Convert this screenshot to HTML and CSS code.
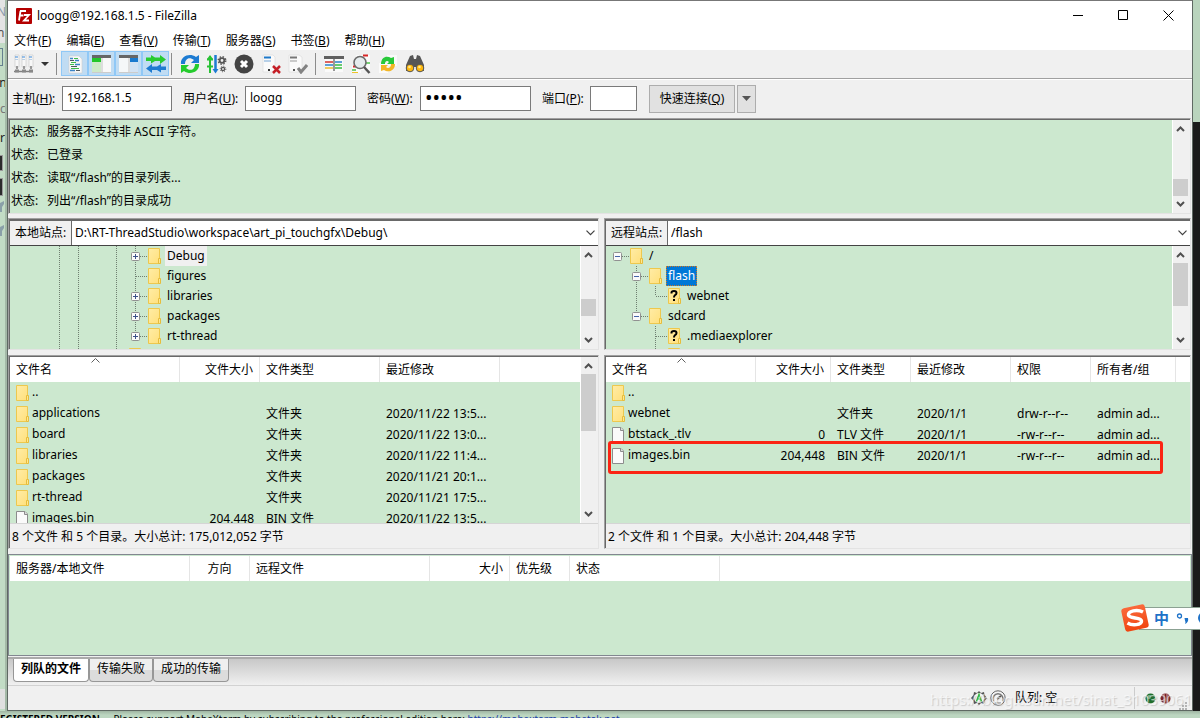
FILE: index.html
```html
<!DOCTYPE html>
<html lang="zh-CN">
<head>
<meta charset="utf-8">
<title>loogg@192.168.1.5 - FileZilla</title>
<link rel="stylesheet" href="styles.css">
</head>
<body>
<svg class="defs" aria-hidden="true">
  <defs>
    <linearGradient id="gf" x1="0" y1="0" x2="1" y2="1"><stop offset="0" stop-color="#ffeca6"/><stop offset="1" stop-color="#ffe07c"/></linearGradient>
    <linearGradient id="gs" x1="0" y1="0" x2="0" y2="1"><stop offset="0" stop-color="#fa6a3c"/><stop offset="1" stop-color="#f04410"/></linearGradient>
  </defs>
  <symbol id="folder" viewBox="0 0 13 16"><path d="M.5.5h11v15H.5z" fill="url(#gf)" stroke="#edc84e"/><path d="M10.5 10.5h2v5h-2z" fill="#ffe791" stroke="#e6bd3c"/></symbol>
  <symbol id="unknown" viewBox="0 0 13 16"><path d="M.5.5h11v15H.5z" fill="url(#gf)" stroke="#edc84e"/><path d="M10.5 10.5h2v5h-2z" fill="#ffe791" stroke="#e6bd3c"/><path d="M3.5 5.5V4.6Q3.5 3 6 3t2.500 2q0 1.300-1.500 2.200Q6 7.900 6 9.500M6 11v2" fill="none" stroke="#000" stroke-width="2"/></symbol>
  <symbol id="file" viewBox="0 0 13 16"><path d="M.5.5H9l2.500 2.500v12.500H.5z" fill="#fafafa" stroke="#8c8c8c"/><path d="M8.500.5v3h3" fill="#ddd" stroke="#8c8c8c"/></symbol>
  <symbol id="up" viewBox="0 0 9 6"><path d="M1 5l3.500-3.500L8 5" fill="none" stroke="#505050" stroke-width="2"/></symbol>
  <symbol id="down" viewBox="0 0 9 6"><path d="M1 1l3.500 3.500L8 1" fill="none" stroke="#505050" stroke-width="2"/></symbol>
  <symbol id="thin" viewBox="0 0 9 6"><path d="M.5.700l4 4 4-4" fill="none" stroke="#404040" stroke-width="1.200"/></symbol>
  <symbol id="sort" viewBox="0 0 9 5"><path d="M.5 4.500l4-4 4 4" fill="none" stroke="#606060"/></symbol>
  <symbol id="plus" viewBox="0 0 9 9"><rect x=".5" y=".5" width="8" height="8" rx="1" fill="#fafafa" stroke="#919191"/><path d="M2 4.500h5M4.500 2v5" stroke="#3b5088"/></symbol>
  <symbol id="minus" viewBox="0 0 9 9"><rect x=".5" y=".5" width="8" height="8" rx="1" fill="#fafafa" stroke="#919191"/><path d="M2 4.500h5" stroke="#4664a8"/></symbol>
</svg>
<div class="desktop">
  <aside class="behind-left" aria-hidden="true">
    <span class="frag frag-a">N</span><span class="frag frag-b">n</span><span class="frag frag-box"></span><span class="frag frag-c">on</span><span class="frag frag-d">ic</span><span class="frag frag-e">r</span><span class="frag frag-dark"></span><span class="frag frag-dark frag-dark2"></span>
    <svg class="frag frag-f" viewBox="0 0 7 36"><path d="M0 3l4-2v3L2 7v5H0zM0 27l4-2v3l-2 3v5H0z" fill="#8aa0a8"/></svg>
    <span class="frag frag-foot"></span>
  </aside>

  <main class="window">
    <header class="titlebar">
      <svg class="logo" viewBox="0 0 16 16"><rect width="16" height="16" rx="1" fill="#b40000"/><path d="M4 3h6M4.500 3L3 12.500M3.500 7.500h4M8 7h5l-5 5.500h5" fill="none" stroke="#fff" stroke-width="1.800"/></svg>
      <h1>loogg@192.168.1.5 - FileZilla</h1>
      <button class="wctl" aria-label="最小化"><svg width="11" height="11"><path d="M0 5.500h10" stroke="#000"/></svg></button>
      <button class="wctl" aria-label="最大化"><svg width="11" height="11"><path d="M.5.5h9v9h-9z" fill="none" stroke="#000"/></svg></button>
      <button class="wctl" aria-label="关闭"><svg width="11" height="11"><path d="M.5.5l10 10M10.500.5l-10 10" stroke="#000"/></svg></button>
    </header>

    <nav class="menubar">
      <button>文件(<u>F</u>)</button><button>编辑(<u>E</u>)</button><button>查看(<u>V</u>)</button><button>传输(<u>T</u>)</button><button>服务器(<u>S</u>)</button><button>书签(<u>B</u>)</button><button>帮助(<u>H</u>)</button>
    </nav>

    <div class="toolbar" role="toolbar">
      <button class="tool" aria-label="站点管理器"><svg viewBox="0 0 20 20"><g fill="#f8f8f8" stroke="#c8c8c8" stroke-width=".6"><path d="M1 1h4v12H1zM8 1h4v12H8zM15 1h4v12h-4z"/></g><path d="M1 3h3M8 3h3M15 3h3" stroke="#3a87d8" stroke-width="1.200"/><path d="M1 5.500h3M8 5.500h3M15 5.500h3" stroke="#b8cfe6"/><path d="M3 12v3M10 12v3M17 12v3M0 17.500h19" stroke="#808080" stroke-width="1.500"/><path d="M1 15.500h4v3H1zM8 15.500h4v3H8zM15 15.500h4v3h-4z" fill="#888"/></svg></button>
      <button class="tool-drop" aria-label="站点列表"><svg width="8" height="4"><path d="M0 0h8L4 4z" fill="#333"/></svg></button>
      <span class="sep"></span>
      <button class="tool on" aria-label="消息日志"><svg viewBox="0 0 20 20"><path d="M4 2h10l3 3v14H4z" fill="#f8f8f8" stroke="#ccc" stroke-width=".6"/><path d="M5 4.500h3M10 6.500h4M10 10.500h5M5 16.500h5" stroke="#3b84c8" stroke-width="1.300"/><path d="M5 6.500h4M6 12.500h6M11 16.500h4" stroke="#505a60" stroke-width="1.200"/><path d="M9 4.500h4M5 10.500h4M6 14.500h8M6 8.500h5" stroke="#3ebd4b" stroke-width="1.200"/></svg></button>
      <button class="tool on" aria-label="本地目录树"><svg viewBox="0 0 20 20"><path d="M0 2h19v16H0z" fill="#f8f8f8"/><path d="M0 8h9v10H0z" fill="#cdeac8"/><path d="M0 1h19v3H0z" fill="#666"/><path d="M0 4h9v4H0z" fill="#22c72a"/><path d="M10 4v14" stroke="#ddd" stroke-width="2"/><path d="M0 18.500h19" stroke="#ccc"/></svg></button>
      <button class="tool on" aria-label="远程目录树"><svg viewBox="0 0 20 20"><path d="M0 2h19v16H0z" fill="#f5f7f8"/><path d="M11 8h8v10h-8z" fill="#d2e2f3"/><path d="M0 1h19v3H0z" fill="#666"/><path d="M11 4h8v4h-8z" fill="#1979ce"/><path d="M10 4v14" stroke="#ddd" stroke-width="2"/><path d="M0 18.500h19" stroke="#ccc"/></svg></button>
      <button class="tool on" aria-label="传输队列"><svg viewBox="0 0 20 20"><path d="M0 3.500h5V1l4 2.500h5V1l6 4.500-6 4.500V7H9L5 9.500V7H0z" fill="#27cb31"/><path d="M20 12.500h-5V10l-4 2.500H6V10l-6 4.500L6 19v-3h5l4 2.500V16h5z" fill="#1e7bd1"/></svg></button>
      <span class="sep sep-tight"></span>
      <button class="tool" aria-label="刷新"><svg viewBox="0 0 20 20"><path d="M1 10C0 3 9-2 16 3l3-2v8h-8l3-3C9 2 5 5 5 10z" fill="#1d7bd2"/><path d="M19 10c1 7-8 12-15 7l-3 2v-8h8l-3 3c5 4 9 1 9-4z" fill="#24cb2d"/></svg></button>
      <button class="tool" aria-label="处理队列"><svg viewBox="0 0 20 20"><path d="M3 19V2M0 5.500h6M0 12.500h6" stroke="#28c234" stroke-width="2" fill="none"/><path d="M0 5l3-4 3 4z" fill="#28c234"/><path d="M8.500 1v16" stroke="#1d7bd2" stroke-width="2.500"/><path d="M5.500 15h6l-3 4.500z" fill="#1d7bd2"/><g fill="none" stroke="#555"><circle cx="15" cy="6.500" r="2.300" stroke-width="1.800"/><circle cx="15" cy="6.500" r="3.800" stroke-dasharray="1.500 1.500" stroke-width="1.400"/><circle cx="16" cy="15" r="1.600" stroke-width="1.400"/><circle cx="16" cy="15" r="2.800" stroke-dasharray="1 1.200"/></g></svg></button>
      <button class="tool" aria-label="取消"><svg viewBox="0 0 20 20"><circle cx="10" cy="10" r="9.500" fill="#444"/><path d="M7 7l6 6M13 7l-6 6" stroke="#fff" stroke-width="3"/></svg></button>
      <button class="tool" aria-label="断开"><svg viewBox="0 0 20 20"><path d="M2 1h10l2 2v15H2z" fill="#fafafa" stroke="#ddd" stroke-width=".7"/><path d="M3 3.500h7" stroke="#1f79c9" stroke-width="2"/><path d="M3 7h7" stroke="#75a6d6"/><path d="M7 15h2v2H7z" fill="#333"/><path d="M12 12l7 7M19 12l-7 7" stroke="#c51f27" stroke-width="2.500"/></svg></button>
      <button class="tool" aria-label="重新连接"><svg viewBox="0 0 20 20"><path d="M1 1h10l3 2v15H1z" fill="#fafafa" stroke="#ddd" stroke-width=".7"/><path d="M2 3.500h7" stroke="#777" stroke-width="2"/><path d="M2 7h7" stroke="#999"/><path d="M5 15h2v2H5z" fill="#555"/><path d="M10 14l3 4 6-7" fill="none" stroke="#828282" stroke-width="3"/></svg></button>
      <span class="sep"></span>
      <button class="tool" aria-label="过滤"><svg viewBox="0 0 20 20"><path d="M1 3h18v15H1z" fill="#fafafa"/><path d="M0 2h20v3H0z" fill="#606060"/><path d="M1 8h8" stroke="#d3322c" stroke-width="1.500"/><path d="M1 11h8M11 8h7" stroke="#2b83ca" stroke-width="1.500"/><path d="M1 14h8" stroke="#eabd2d" stroke-width="1.500"/><path d="M11 11h7M11 14h7" stroke="#3abd42" stroke-width="1.500"/><path d="M10 5v12" stroke="#777" stroke-width="1.500"/></svg></button>
      <button class="tool" aria-label="比较"><svg viewBox="0 0 20 20"><path d="M5 1h14v15H5zM1 11h9v8H1z" fill="#fafafa"/><path d="M12 1.500h5M2 12.500h3" stroke="#d72727" stroke-width="1.800"/><path d="M15 9h4M1 16h4" stroke="#4cc44b" stroke-width="1.500"/><path d="M1 18.500h6" stroke="#efc329"/><circle cx="9" cy="8.500" r="6" fill="#e5ebed" stroke="#6b6b6b" stroke-width="1.600"/><path d="M13 13l5.500 6" stroke="#555" stroke-width="2.500"/></svg></button>
      <button class="tool" aria-label="同步浏览"><svg viewBox="0 0 20 20"><path d="M9 1h10v11H9zM1 9h9v10H1z" fill="#fafafa"/><path d="M3 10c0-7 6-9 10-6l3-1v7H9l2-2C9 6 7 7 7 10z" fill="#28c93a"/><path d="M17 10c0 7-7 9-11 6l-3 1v-6h7l-2 2c2 2 5 1 5-3z" fill="#f3b625"/></svg></button>
      <button class="tool" aria-label="查找"><svg viewBox="0 0 20 20"><path d="M5 2l3-1 1 4h2l1-4 3 1 4 9v6h-7v-4H8v4H1v-6z" fill="#565656"/><circle cx="5" cy="14" r="3.800" fill="#ffb90e" stroke="#555"/><circle cx="15" cy="14" r="3.800" fill="#ffb90e" stroke="#555"/><circle cx="4.500" cy="13" r="1.300" fill="#ffe78c"/><circle cx="14.500" cy="13" r="1.300" fill="#ffe78c"/></svg></button>
    </div>

    <form class="quick">
      <label for="host">主机(<u>H</u>):</label><input id="host" value="192.168.1.5">
      <label for="user">用户名(<u>U</u>):</label><input id="user" value="loogg">
      <label for="pass">密码(<u>W</u>):</label><input id="pass" type="password" value="12345">
      <label for="port">端口(<u>P</u>):</label><input id="port">
      <button type="button" class="push connect">快速连接(<u>Q</u>)</button>
      <button type="button" class="push" aria-label="历史"><svg width="9" height="5"><path d="M0 0h9L4.500 5z" fill="#555"/></svg></button>
    </form>

    <section class="sunken log">
      <dl>
        <div><dt>状态:</dt><dd>服务器不支持非 ASCII 字符。</dd></div>
        <div><dt>状态:</dt><dd>已登录</dd></div>
        <div><dt>状态:</dt><dd>读取“/flash”的目录列表...</dd></div>
        <div><dt>状态:</dt><dd>列出“/flash”的目录成功</dd></div>
      </dl>
      <div class="scroll"><svg class="arr"><use href="#up"/></svg><i class="push-down"></i><i class="thumb thumb-s"></i><i class="tail"></i><svg class="arr"><use href="#down"/></svg></div>
    </section>

    <div class="panes">
      <section class="sunken tree-pane">
        <div class="address"><label for="lsite">本地站点:</label><span class="combo"><select id="lsite"><option>D:\RT-ThreadStudio\workspace\art_pi_touchgfx\Debug\</option></select><svg><use href="#thin"/></svg></span></div>
        <div class="tree-row">
          <div class="tree">
            <svg class="guides" width="200" height="103"><path d="M49.500 0v103M68.500 0v103M106.500 0v103M125.500 0v90M126 10.500h11M126 30.500h11M126 50.500h11M126 70.500h11M126 90.500h11"/></svg>
            <ul class="deep">
              <li><button aria-label="展开"><svg><use href="#plus"/></svg></button><svg class="ico"><use href="#folder"/></svg><span class="name current">Debug</span></li>
              <li><i class="no-toggle"></i><svg class="ico"><use href="#folder"/></svg><span class="name">figures</span></li>
              <li><button aria-label="展开"><svg><use href="#plus"/></svg></button><svg class="ico"><use href="#folder"/></svg><span class="name">libraries</span></li>
              <li><button aria-label="展开"><svg><use href="#plus"/></svg></button><svg class="ico"><use href="#folder"/></svg><span class="name">packages</span></li>
              <li><button aria-label="展开"><svg><use href="#plus"/></svg></button><svg class="ico"><use href="#folder"/></svg><span class="name">rt-thread</span></li>
              <li class="outdent"><i class="no-toggle"></i><svg class="ico"><use href="#folder"/></svg></li>
            </ul>
          </div>
          <div class="scroll"><svg class="arr"><use href="#up"/></svg><i class="push-down"></i><i class="thumb thumb-s"></i><i class="tail tail-l"></i><svg class="arr"><use href="#down"/></svg></div>
        </div>
      </section>

      <section class="sunken tree-pane">
        <div class="address"><label for="rsite">远程站点:</label><span class="combo"><select id="rsite"><option>/flash</option></select><svg><use href="#thin"/></svg></span></div>
        <div class="tree-row">
          <div class="tree">
            <svg class="guides" width="200" height="103"><path d="M12 10.500h11M30.500 20v50M31 30.500h11M31 70.500h11M49.500 40v10M50 50.500h12M49.500 80v23M50 90.500h12"/></svg>
            <ul>
              <li><button aria-label="折叠"><svg><use href="#minus"/></svg></button><svg class="ico"><use href="#folder"/></svg><span class="name">/</span></li>
              <li class="l1"><button aria-label="折叠"><svg><use href="#minus"/></svg></button><svg class="ico"><use href="#folder"/></svg><span class="name picked">flash</span></li>
              <li class="l2"><i class="no-toggle"></i><svg class="ico"><use href="#unknown"/></svg><span class="name">webnet</span></li>
              <li class="l1"><button aria-label="折叠"><svg><use href="#minus"/></svg></button><svg class="ico"><use href="#folder"/></svg><span class="name">sdcard</span></li>
              <li class="l2"><i class="no-toggle"></i><svg class="ico"><use href="#unknown"/></svg><span class="name">.mediaexplorer</span></li>
              <li class="l2"><i class="no-toggle"></i><svg class="ico"><use href="#unknown"/></svg></li>
            </ul>
          </div>
          <div class="scroll"><svg class="arr"><use href="#up"/></svg><i class="thumb thumb-m"></i><i class="push-down"></i><svg class="arr"><use href="#down"/></svg></div>
        </div>
      </section>

      <section class="sunken list-pane">
        <div class="list-row">
          <div class="list">
            <table>
              <colgroup><col class="w170"><col class="w80"><col class="w120"><col class="w120"><col></colgroup>
              <thead><tr><th>文件名<svg class="sort"><use href="#sort"/></svg></th><th class="num">文件大小</th><th>文件类型</th><th>最近修改</th><th></th></tr></thead>
              <tbody>
                <tr><td><svg class="ico"><use href="#folder"/></svg>..</td><td></td><td></td><td></td><td></td></tr>
                <tr><td><svg class="ico"><use href="#folder"/></svg>applications</td><td></td><td>文件夹</td><td>2020/11/22 13:5...</td><td></td></tr>
                <tr><td><svg class="ico"><use href="#folder"/></svg>board</td><td></td><td>文件夹</td><td>2020/11/22 13:0...</td><td></td></tr>
                <tr><td><svg class="ico"><use href="#folder"/></svg>libraries</td><td></td><td>文件夹</td><td>2020/11/22 11:4...</td><td></td></tr>
                <tr><td><svg class="ico"><use href="#folder"/></svg>packages</td><td></td><td>文件夹</td><td>2020/11/21 20:1...</td><td></td></tr>
                <tr><td><svg class="ico"><use href="#folder"/></svg>rt-thread</td><td></td><td>文件夹</td><td>2020/11/21 17:5...</td><td></td></tr>
                <tr><td><svg class="ico"><use href="#file"/></svg>images.bin</td><td class="num">204,448</td><td>BIN 文件</td><td>2020/11/22 13:5...</td><td></td></tr>
              </tbody>
            </table>
          </div>
          <div class="scroll"><svg class="arr"><use href="#up"/></svg><i class="thumb thumb-l"></i><i class="push-down"></i><svg class="arr"><use href="#down"/></svg></div>
        </div>
        <p class="summary">8 个文件 和 5 个目录。大小总计: 175,012,052 字节</p>
      </section>

      <section class="sunken list-pane">
        <div class="list-row">
          <div class="list">
            <table>
              <colgroup><col class="w150"><col class="w75"><col class="w80"><col class="w100"><col class="w80"><col class="w85"><col></colgroup>
              <thead><tr><th>文件名<svg class="sort"><use href="#sort"/></svg></th><th class="num">文件大小</th><th>文件类型</th><th>最近修改</th><th>权限</th><th>所有者/组</th><th></th></tr></thead>
              <tbody>
                <tr><td><svg class="ico"><use href="#folder"/></svg>..</td><td></td><td></td><td></td><td></td><td></td><td></td></tr>
                <tr><td><svg class="ico"><use href="#folder"/></svg>webnet</td><td></td><td>文件夹</td><td>2020/1/1</td><td>drw-r--r--</td><td>admin ad...</td><td></td></tr>
                <tr><td><svg class="ico"><use href="#file"/></svg>btstack_.tlv</td><td class="num">0</td><td>TLV 文件</td><td>2020/1/1</td><td>-rw-r--r--</td><td>admin ad...</td><td></td></tr>
                <tr><td><svg class="ico"><use href="#file"/></svg>images.bin</td><td class="num">204,448</td><td>BIN 文件</td><td>2020/1/1</td><td>-rw-r--r--</td><td>admin ad...</td><td></td></tr>
              </tbody>
            </table>
            <div class="marker"></div>
          </div>
        </div>
        <p class="summary">2 个文件 和 1 个目录。大小总计: 204,448 字节</p>
      </section>
    </div>

    <section class="queue">
      <table>
        <colgroup><col class="w180"><col class="w60"><col class="w180"><col class="w80"><col class="w60"><col class="w150"><col></colgroup>
        <thead><tr><th>服务器/本地文件</th><th class="mid">方向</th><th>远程文件</th><th class="num">大小</th><th>优先级</th><th>状态</th><th></th></tr></thead>
      </table>
    </section>
    <div class="tabs" role="tablist">
      <button role="tab" aria-selected="true" class="tab active">列队的文件</button><button role="tab" class="tab">传输失败</button><button role="tab" class="tab">成功的传输</button>
    </div>
    <footer class="status">
      <svg width="16" height="16"><path d="M8 1l2 2 3-1 .5 3L16 8l-2.500 3-.5 3-3-1-2 2-2-2-3 1-.5-3L0 8l2.500-3L3 2l3 1z" fill="#555"/><circle cx="8" cy="8" r="5" fill="#f4f4f4"/><path d="M5.500 11.500L8 4.500l2.500 7M6.500 9h3" fill="none" stroke="#35b73a" stroke-width="1.500"/></svg>
      <svg width="16" height="16"><circle cx="8" cy="8" r="7.200" fill="#f4f4f4" stroke="#666"/><path d="M3.500 11A5 5 0 1 1 12.500 11" fill="none" stroke="#777" stroke-width="1.500"/><path d="M7 9l4-3" stroke="#555" stroke-width="2"/><path d="M5 13h6" stroke="#777"/></svg>
      <span class="q">队列: 空</span>
      <span class="lights"><svg width="11" height="11"><circle cx="5.500" cy="5.500" r="5" fill="#1f6e2c"/><circle cx="4" cy="4" r="2" fill="#7fb288"/></svg><svg width="11" height="11"><circle cx="5.500" cy="5.500" r="5" fill="#7b1f24"/><path d="M4 1v9M7 1v9" stroke="#caa"/></svg></span>
      <svg class="grip" width="8" height="8"><path d="M6 0h2v2H6zM3 3h2v2H3zM6 3h2v2H6zM0 6h2v2H0zM3 6h2v2H3zM6 6h2v2H6z" fill="#b4b4b4"/></svg>
    </footer>
  </main>

  <aside class="behind-right"></aside>
  <div class="behind-bottom"><b>EGISTERED VERSION</b> &nbsp;- &nbsp;Please support MobaXterm by subscribing to the professional edition here: <a href="#">https://mobaxterm.mobatek.net</a></div>
  <div class="watermark">https://blog.csdn.net/sinat_31039061</div>
  <div class="ime">
    <svg class="ime-logo" viewBox="0 0 28 28"><rect x="2" y="2" width="24" height="24" rx="3" fill="url(#gs)" transform="rotate(-12 14 14)"/><path d="M22 8C16 5 7 7 7.500 11c.5 4 13 2 13 6 0 4-9 5-14 2" fill="none" stroke="#fff" stroke-width="3.500"/></svg>
    <div class="ime-bar"><span>中</span><svg width="36" height="16"><circle cx="4.500" cy="6" r="2" fill="none" stroke="#1e72c8" stroke-width="1.300"/><path d="M9.500 8h3.500q1 4-3 6 1-2 0-3.500z" fill="#1e72c8"/><circle cx="29" cy="8" r="6" fill="#1e72c8"/></svg></div>
  </div>
</div>
</body>
</html>
```

FILE: styles.css
```css
* { box-sizing: border-box; }
body { margin: 0; color: #000; font: 12px/16px "Noto Sans", "Noto Sans CJK SC", sans-serif; }
button, input, select { font: inherit; color: inherit; margin: 0; padding: 0; border: 0; background: none; border-radius: 0; }
h1, p, dl, dd, ul { margin: 0; padding: 0; font-weight: normal; }
svg { display: block; flex: none; }
.defs { position: absolute; width: 0; height: 0; }
u { text-underline-offset: 1px; }

.desktop { position: relative; display: grid; grid-template: minmax(0, 1fr) 7px / 7px minmax(0, 1fr) 7px; min-height: 100vh; overflow: hidden; background: #b9d4bd; }
.behind-left { position: relative; overflow: hidden; background: linear-gradient(#e4e4e4 43px, #c2dcc5 43px); border-right: 2px solid #a4b9a7; }
.frag { position: absolute; left: -3px; color: #555; }
.frag-a { top: 4px; color: #8a9bab; }
.frag-b { top: 25px; }
.frag-box { top: 48px; width: 6px; height: 18px; border: 1px solid #65808e; }
.frag-c { top: 75px; left: -8px; color: #222; }
.frag-d { top: 101px; color: #777; }
.frag-e { top: 130px; left: 0; color: #222; }
.frag-dark { top: 155px; width: 6px; height: 16px; background: #2b2b2b; border: 1px solid #999; }
.frag-dark2 { top: 178px; height: 18px; }
.frag-f { top: 200px; left: 0; width: 7px; height: 36px; }
.frag-foot { bottom: 2px; width: 10px; height: 20px; background: #e0e0e0; }
.behind-right { background: linear-gradient(#b9d4bd 122px, #1a1a1a 122px); }
.behind-bottom { grid-column: 1 / -1; height: 8px; overflow: hidden; white-space: nowrap; padding-top: 1px; font: 10px/14px "Noto Sans", sans-serif; background: linear-gradient(#9fb5a2, #bcd6c0 4px); }
.behind-bottom a { color: #1c3fa8; }

.window { display: flex; flex-direction: column; background: #f0f0f0; border: 1px solid #5f6963; border-top-color: #777; }
.titlebar { display: flex; align-items: center; height: 30px; padding: 0 1px 1px 8px; background: #fff; }
.logo { width: 16px; height: 16px; }
.titlebar h1 { flex: 1; margin-left: 5px; font-size: 12px; }
.wctl { width: 45px; display: flex; justify-content: center; }
.menubar { display: flex; gap: 15px; height: 19px; padding-left: 6px; background: #fff; }
.menubar button { line-height: 19px; }

.toolbar { display: flex; align-items: center; height: 28px; padding: 0 3px 1px 2px; }
.tool { width: 27px; height: 25px; display: flex; align-items: center; justify-content: center; }
.tool svg { width: 20px; height: 20px; }
.tool.on { background: #c0dcf3; border: 1px solid #90c8f6; }
.tool-drop { width: 15px; display: flex; justify-content: center; }
.sep { width: 1px; height: 22px; margin: 0 4px; background: #8b8b8b; }
.sep-tight { margin: 0 4px 0 2px; }

.quick { display: grid; grid-template-columns: 50px 110px 73px 111px 64px 111px 59px 47px 98px 21px; align-items: center; height: 40px; padding: 0 4px; border-top: 1px solid #a0a0a0; box-shadow: inset 0 1px #fff; }
.quick label { white-space: nowrap; }
.quick input + label { padding-left: 11px; }
.quick input { width: 100%; height: 25px; padding: 0 4px 2px; background: #fff; border: 1px solid #7a7a7a; }
.quick input[type="password"] { font-size: 20px; }
.push { height: 28px; display: flex; align-items: center; justify-content: center; background: #e1e1e1; border: 1px solid #adadad; margin-left: 2px; }
.connect { margin-left: 12px; }

.sunken { border: 1px solid; border-color: #a0a0a0 #e3e3e3 #e3e3e3 #a0a0a0; box-shadow: inset 1px 1px #696969; padding: 1px 0 0 1px; background: #cce8cf; }
.log { display: flex; margin-right: 1px; }
.log dl { flex: 1; padding-bottom: 1px; }
.log dl div { display: flex; height: 23px; align-items: center; }
.log dt { width: 36px; padding-left: 1px; }
.log dd { padding-left: 1px; }
.scroll { display: flex; flex-direction: column; align-items: center; width: 18px; padding: 5px 2px 5px 0; background: #f0f0f0; border-left: 1px solid #fff; }
.scroll svg { width: 9px; height: 6px; margin: 1px 0; }
.push-down { flex: 1; }
.thumb { width: 15px; background: #cdcdcd; }
.thumb-s { height: 17px; }
.thumb-m { height: 43px; margin-top: 4px; }
.thumb-l { height: 57px; margin-top: 4px; }
.tail { height: 4px; }
.tail-l { height: 20px; }

.panes { display: grid; grid-template-columns: minmax(0, 591fr) minmax(0, 587fr); gap: 5px; margin: 4px 1px 5px 0; }
.tree-pane { padding-top: 2px; box-shadow: inset 1px 2px #696969; }
.address { display: flex; height: 25px; background: #f0f0f0; border-bottom: 1px solid #444; }
.address label { width: 62px; padding-left: 5px; line-height: 24px; border-right: 1px solid #696969; white-space: nowrap; }
.combo { position: relative; flex: 1; min-width: 0; background: #fff; }
.combo select { width: 100%; height: 24px; padding: 0 20px 0 3px; appearance: none; text-overflow: ellipsis; }
.combo svg { position: absolute; right: 3px; top: 9px; width: 9px; height: 6px; pointer-events: none; }
.tree-row { display: flex; height: 103px; }
.tree { position: relative; flex: 1; overflow: hidden; }
.guides { position: absolute; inset: 0 auto auto 0; }
.guides path { fill: none; stroke: #6f7f71; stroke-dasharray: 1 1; }
.tree ul { position: relative; list-style: none; padding-left: 7px; }
.tree ul.deep { padding-left: 121px; }
.tree li { display: flex; align-items: center; height: 20px; }
.l1 { padding-left: 19px; }
.l2 { padding-left: 38px; }
.tree .outdent { margin-left: -19px; }
.tree button, .no-toggle { width: 9px; height: 9px; margin-right: 8px; }
.tree button svg { width: 9px; height: 9px; }
.ico { width: 13px; height: 16px; }
.name { margin-left: 4px; padding: 0 2px; line-height: 20px; }
.current { background: #f0f0f0; }
.picked { color: #fff; background: #0078d7; outline: 1px dotted #d07820; outline-offset: -1px; }

.list-pane { display: flex; flex-direction: column; }
.list-row { display: flex; height: 166px; }
.list { position: relative; flex: 1; overflow: hidden; }
table { width: 100%; table-layout: fixed; border-collapse: separate; border-spacing: 0; }
th { position: relative; height: 25px; padding: 0 6px; font-weight: normal; text-align: left; background: #fff; border-right: 1px solid #e5e5e5; white-space: nowrap; }
th:last-child { border-right: 0; }
td { height: 21px; padding: 0 0 0 6px; white-space: nowrap; }
td .ico { display: inline-block; margin-right: 3px; vertical-align: middle; }
.num { text-align: right; padding-right: 6px; }
.mid { text-align: center; }
.sort { position: absolute; top: 1px; left: 50%; width: 9px; height: 5px; margin-left: -4px; }
.w60 { width: 60px; } .w75 { width: 75px; } .w80 { width: 80px; } .w85 { width: 85px; }
.w100 { width: 100px; } .w120 { width: 120px; } .w150 { width: 150px; } .w170 { width: 170px; } .w180 { width: 180px; }
.marker { position: absolute; left: 2px; top: 84px; width: 555px; height: 33px; border: 3px solid #fb2414; border-radius: 3px; }
.summary { height: 25px; padding-left: 2px; line-height: 26px; background: #f0f0f0; border-top: 1px solid #d5d5d5; }

.queue { flex: 1; min-height: 60px; background: #cce8cf; border: 1px solid #828790; padding: 1px; }
.tabs { display: flex; align-items: flex-start; height: 29px; margin-top: 1px; padding-left: 5px; background: linear-gradient(#c8c8c8, #f0f0f0); border-top: 2px solid #aaa; border-bottom: 1px solid #d2d2d2; }
.tab { height: 23px; padding: 0 7px 3px; background: linear-gradient(#efefef 50%, #dcdcdc 50%); border: 1px solid #979797; border-top: 0; border-radius: 0 0 4px 4px; }
.tab.active { font-weight: bold; background: #fff; }
.status { display: flex; align-items: center; height: 24px; padding: 0 5px 0 963px; }
.status svg + svg { margin-left: 3px; }
.q { margin-left: 9px; flex: 1; }
.lights { display: flex; gap: 1px; height: 22px; align-items: center; padding: 0 8px 0 10px; border-left: 1px solid #ccc; }
.grip { align-self: flex-end; }
.watermark { position: absolute; right: 8px; bottom: 9px; font: 15px/20px "Noto Sans", sans-serif; color: rgba(255, 255, 255, .6); text-shadow: 1px 1px 1px rgba(120, 120, 120, .3); }
.ime { position: absolute; right: 0; bottom: 86px; display: flex; align-items: center; height: 28px; }
.ime-logo { position: relative; width: 28px; height: 28px; }
.ime-bar { display: flex; align-items: center; gap: 6px; width: 61px; height: 23px; margin-left: -10px; padding-left: 14px; overflow: hidden; background: #fff; border: 1px solid #8ba192; border-right: 0; color: #1e72c8; font-size: 15px; font-weight: bold; }
```
